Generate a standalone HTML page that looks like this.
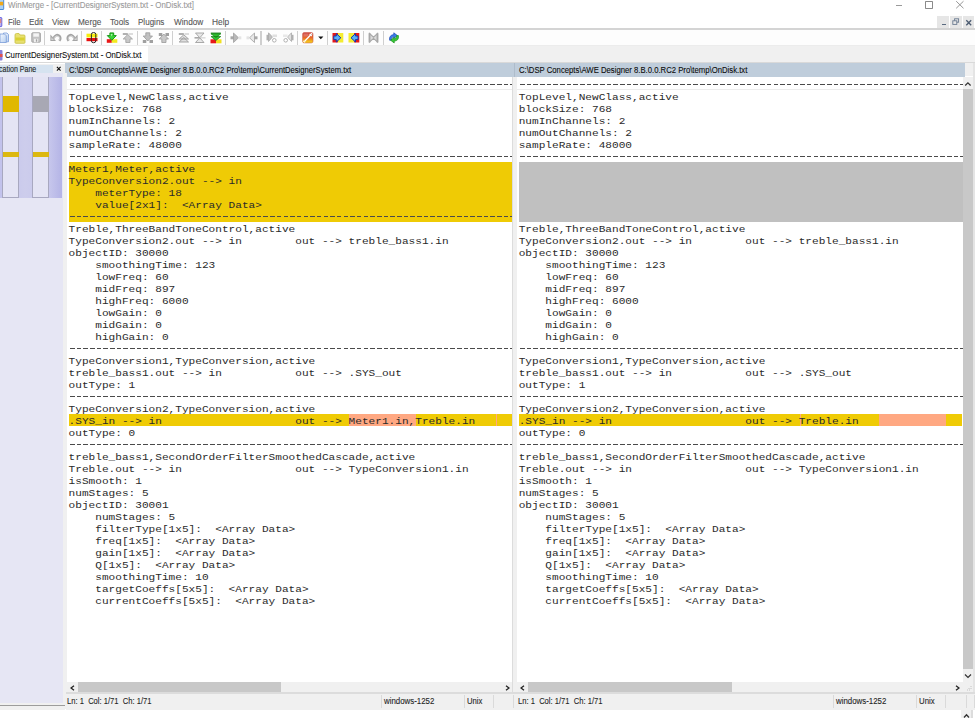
<!DOCTYPE html>
<html><head><meta charset="utf-8"><style>
html,body{margin:0;padding:0;}
body{width:975px;height:718px;overflow:hidden;position:relative;background:#fff;font-family:'Liberation Sans', sans-serif;}
body > div, body > svg, body div div, body div svg {position:absolute;}
</style></head><body>
<div style="left:0px;top:0px;width:975px;height:28px;background:#ffffff;"></div>
<div style="left:7.5px;top:0.05px;font-family:'Liberation Sans', sans-serif;font-size:8.9px;line-height:normal;color:#9a9a9a;white-space:pre;-webkit-text-stroke:0.1px #9a9a9a;transform:scaleX(0.8916);transform-origin:0 0;">WinMerge - [CurrentDesignerSystem.txt - OnDisk.txt]</div>
<div style="left:895.6px;top:4.5px;width:6.8px;height:0.9px;background:#9a9a9a;"></div>
<div style="left:925.3px;top:1.3px;width:5.5px;height:5.5px;border:0.9px solid #8a8a8a;border-radius:0.8px"></div>
<svg style="left:955px;top:0px" width="10" height="10" viewBox="0 0 10 10"><path d="M1.2 1.2 L8.5 8.3 M8.5 1.2 L1.2 8.3" stroke="#8a8a8a" stroke-width="0.9"/></svg>
<svg style="left:0px;top:0px" width="5" height="11" viewBox="0 0 5 11"><rect x="-3" y="-0.5" width="6.7" height="10" rx="0.6" fill="#a8d0f8" stroke="#3a80d0" stroke-width="0.9"/><rect x="-3" y="1.8" width="6.2" height="3.6" fill="#f0a818"/></svg>
<div style="left:7.5px;top:16.74px;font-family:'Liberation Sans', sans-serif;font-size:8.8px;line-height:normal;color:#555;white-space:pre;-webkit-text-stroke:0.1px #555;transform:scaleX(0.9022);transform-origin:0 0;">File</div>
<div style="left:29.0px;top:16.74px;font-family:'Liberation Sans', sans-serif;font-size:8.8px;line-height:normal;color:#555;white-space:pre;-webkit-text-stroke:0.1px #555;transform:scaleX(0.9228);transform-origin:0 0;">Edit</div>
<div style="left:51.7px;top:16.74px;font-family:'Liberation Sans', sans-serif;font-size:8.8px;line-height:normal;color:#555;white-space:pre;-webkit-text-stroke:0.1px #555;transform:scaleX(0.9249);transform-origin:0 0;">View</div>
<div style="left:77.8px;top:16.74px;font-family:'Liberation Sans', sans-serif;font-size:8.8px;line-height:normal;color:#555;white-space:pre;-webkit-text-stroke:0.1px #555;transform:scaleX(0.9343);transform-origin:0 0;">Merge</div>
<div style="left:109.9px;top:16.74px;font-family:'Liberation Sans', sans-serif;font-size:8.8px;line-height:normal;color:#555;white-space:pre;-webkit-text-stroke:0.1px #555;transform:scaleX(0.9296);transform-origin:0 0;">Tools</div>
<div style="left:137.79999999999998px;top:16.74px;font-family:'Liberation Sans', sans-serif;font-size:8.8px;line-height:normal;color:#555;white-space:pre;-webkit-text-stroke:0.1px #555;transform:scaleX(0.9148);transform-origin:0 0;">Plugins</div>
<div style="left:173.5px;top:16.74px;font-family:'Liberation Sans', sans-serif;font-size:8.8px;line-height:normal;color:#555;white-space:pre;-webkit-text-stroke:0.1px #555;transform:scaleX(0.9362);transform-origin:0 0;">Window</div>
<div style="left:211.7px;top:16.74px;font-family:'Liberation Sans', sans-serif;font-size:8.8px;line-height:normal;color:#555;white-space:pre;-webkit-text-stroke:0.1px #555;transform:scaleX(0.9451);transform-origin:0 0;">Help</div>
<svg style="left:0px;top:17px" width="3" height="11" viewBox="0 0 3 11"><rect x="-3" y="0.6" width="4.8" height="9" rx="0.6" fill="#c0b0e8" stroke="#5858e0" stroke-width="0.9"/><rect x="-3" y="2" width="4.3" height="4" fill="#d88888"/></svg>
<div style="left:937px;top:16px;width:11.5px;height:11.5px;background:#e6e6e6;"></div>
<div style="left:950px;top:16px;width:11.5px;height:11.5px;background:#e6e6e6;"></div>
<div style="left:962.8px;top:16px;width:11.5px;height:11.5px;background:#e6e6e6;"></div>
<div style="left:941.5px;top:23.5px;width:4px;height:1.3px;background:#5a6a80;"></div>
<svg style="left:952px;top:18px" width="8" height="8" viewBox="0 0 8 8"><rect x="2.6" y="0.8" width="4" height="3.4" fill="none" stroke="#6a7a90" stroke-width="0.9"/><rect x="0.8" y="2.8" width="4" height="3.6" fill="#e6e6e6" stroke="#6a7a90" stroke-width="0.9"/></svg>
<svg style="left:965px;top:18.5px" width="8" height="8" viewBox="0 0 8 8"><path d="M1.3 1.3 L6.2 6.2 M6.2 1.3 L1.3 6.2" stroke="#4a5a70" stroke-width="1.3"/></svg>
<div style="left:0px;top:28px;width:975px;height:1.5px;background:#d4d4d4;"></div>
<div style="left:0px;top:29.5px;width:975px;height:15.7px;background:#fdfdfd;"></div>
<div style="left:0px;top:45px;width:975px;height:1px;background:#ececec;"></div>
<div style="left:44.3px;top:31px;width:1.2px;height:13.5px;background:#cfcfcf;"></div>
<div style="left:80.6px;top:31px;width:1.2px;height:13.5px;background:#cfcfcf;"></div>
<div style="left:100.5px;top:31px;width:1.2px;height:13.5px;background:#cfcfcf;"></div>
<div style="left:136.5px;top:31px;width:1.2px;height:13.5px;background:#cfcfcf;"></div>
<div style="left:172.3px;top:31px;width:1.2px;height:13.5px;background:#cfcfcf;"></div>
<div style="left:224.5px;top:31px;width:1.2px;height:13.5px;background:#cfcfcf;"></div>
<div style="left:260.4px;top:31px;width:1.2px;height:13.5px;background:#cfcfcf;"></div>
<div style="left:296.5px;top:31px;width:1.2px;height:13.5px;background:#cfcfcf;"></div>
<div style="left:326.6px;top:31px;width:1.2px;height:13.5px;background:#cfcfcf;"></div>
<div style="left:362.6px;top:31px;width:1.2px;height:13.5px;background:#cfcfcf;"></div>
<div style="left:382.7px;top:31px;width:1.2px;height:13.5px;background:#cfcfcf;"></div>
<svg style="left:-1px;top:31.5px" width="12" height="12" viewBox="0 0 12 12"><defs><linearGradient id="nd" x1="0" y1="0" x2="1" y2="1"><stop offset="0" stop-color="#f4f8ff"/><stop offset="1" stop-color="#b8d0f0"/></linearGradient></defs><path d="M4.5 1 H8 L9.5 2.5 V9.8 H4.5 Z" fill="url(#nd)" stroke="#7a9cd8" stroke-width="0.8"/><path d="M1 2 H5.5 L7.3 3.8 V10.5 H1 Z" fill="url(#nd)" stroke="#7a9cd8" stroke-width="0.8"/></svg>
<svg style="left:13.5px;top:31.5px" width="12" height="12" viewBox="0 0 12 12"><path d="M1 3 Q1 1.5 2.5 1.5 H5 L6 3 H10 Q11 3 11 4 V10.5 Q11 11.3 10 11.3 H2 Q1 11.3 1 10.5 Z" fill="#e8e070" stroke="#c8c040" stroke-width="0.8"/><rect x="1.5" y="5.5" width="9" height="3" fill="#d8d030"/></svg>
<svg style="left:30.5px;top:31.5px" width="12" height="12" viewBox="0 0 12 12"><rect x="0.8" y="0.8" width="8.6" height="9.4" rx="0.8" fill="#c4c4c4" stroke="#a0a0a0" stroke-width="0.9"/><rect x="2.3" y="1.3" width="5.6" height="3.4" fill="#f4f4f4"/><rect x="3" y="6.8" width="4.2" height="3.4" fill="#f0f0f0"/><rect x="4.9" y="7.3" width="1.3" height="2.4" fill="#a0a0a0"/></svg>
<svg style="left:49.5px;top:32px" width="12" height="12" viewBox="0 0 12 12"><path d="M3.5 6 Q6.5 1.2 9.6 4.2 Q11.2 6.2 9.3 8.8" fill="none" stroke="#a4a4a4" stroke-width="2.4"/><path d="M3.8 5.8 Q6.5 2.4 9 4.6 Q10.2 6.2 9.1 8.2" fill="none" stroke="#dadada" stroke-width="0.8"/><path d="M0.4 2.6 L0.4 8.9 L6 8.9 Z" fill="#a4a4a4"/><path d="M1.3 5.2 L1.3 8.1 L4 8.1 Z" fill="#d4d4d4"/></svg>
<svg style="left:65.5px;top:32px" width="12" height="12" viewBox="0 0 12 12"><path d="M8.5 6 Q5.5 1.2 2.4 4.2 Q0.8 6.2 2.7 8.8" fill="none" stroke="#a4a4a4" stroke-width="2.4"/><path d="M8.2 5.8 Q5.5 2.4 3 4.6 Q1.8 6.2 2.9 8.2" fill="none" stroke="#dadada" stroke-width="0.8"/><path d="M11.6 2.6 L11.6 8.9 L6 8.9 Z" fill="#a4a4a4"/><path d="M10.7 5.2 L10.7 8.1 L8 8.1 Z" fill="#d4d4d4"/></svg>
<svg style="left:85.5px;top:32px" width="12" height="12" viewBox="0 0 12 12"><rect x="0.5" y="1.7" width="11" height="3.7" fill="#f6ee10"/><rect x="0.5" y="6" width="11" height="3.2" fill="#e81010"/><rect x="5.4" y="0.5" width="4.4" height="10.2" rx="2" fill="none" stroke="#282828" stroke-width="1"/></svg>
<svg style="left:105.5px;top:32px" width="12" height="12" viewBox="0 0 12 12"><rect x="0.8" y="7.2" width="5" height="3.6" fill="#e81818"/><rect x="5.8" y="7.2" width="5.5" height="3.6" fill="#f2ea20"/><path d="M3.9 0.9 H7.7 V3.6 H10.3 L5.8 8.3 L1.3 3.6 H3.9 Z" fill="#3ad23a" stroke="#0a900a" stroke-width="0.9"/><path d="M4.6 2 L6.6 2 L5.4 4.5 Z" fill="#c8f8c8" opacity="0.8"/></svg>
<svg style="left:121.5px;top:32px" width="12" height="12" viewBox="0 0 12 12"><rect x="0.8" y="1" width="5" height="2" fill="#b0b0b0"/><rect x="6.5" y="1" width="4.5" height="2" fill="#dcdcdc"/><path d="M5.8 2.5 L10.5 7 H8 V10.5 H3.8 V7 H1.2 Z" fill="#c8c8c8" stroke="#a0a0a0" stroke-width="0.8"/></svg>
<svg style="left:141.5px;top:32px" width="12" height="12" viewBox="0 0 12 12"><rect x="0.8" y="8" width="3.5" height="3" fill="#a0a0a0"/><rect x="7.5" y="8" width="3.5" height="3" fill="#a0a0a0"/><path d="M3.8 0.8 H7.8 V4 H10.5 L5.8 9 L1.2 4 H3.8 Z" fill="#c0c0c0" stroke="#9a9a9a" stroke-width="0.8"/></svg>
<svg style="left:157.5px;top:32px" width="12" height="12" viewBox="0 0 12 12"><rect x="0.8" y="1" width="3.5" height="3" fill="#a0a0a0"/><rect x="7.5" y="1" width="3.5" height="3" fill="#a0a0a0"/><path d="M5.8 2 L10.5 7 H8 V10.5 H3.8 V7 H1.2 Z" fill="#c8c8c8" stroke="#9a9a9a" stroke-width="0.8"/></svg>
<svg style="left:177.5px;top:32px" width="12" height="12" viewBox="0 0 12 12"><rect x="0.8" y="1" width="5" height="2" fill="#b0b0b0"/><rect x="6.5" y="1" width="4.5" height="2" fill="#dcdcdc"/><path d="M5.8 2.8 L10.5 7 H1.2 Z M5.8 5.5 L10.5 10 H1.2 Z" fill="#e0e0e0" stroke="#9a9a9a" stroke-width="0.9"/></svg>
<svg style="left:193.5px;top:32px" width="12" height="12" viewBox="0 0 12 12"><path d="M1.5 1 H10 L5.8 5.8 Z M1.5 10.5 H10 L5.8 5.8 Z" fill="#e8e8e8" stroke="#a0a0a0" stroke-width="0.9"/><rect x="0.5" y="5" width="5" height="1.6" fill="#a8a8a8"/><rect x="7" y="5" width="4.5" height="1.6" fill="#dcdcdc"/></svg>
<svg style="left:209.5px;top:32px" width="12" height="12" viewBox="0 0 12 12"><rect x="0.5" y="7.3" width="5.5" height="4" fill="#e81818"/><rect x="6" y="7.3" width="5.5" height="4" fill="#f0e020"/><rect x="0.8" y="0.6" width="10" height="1.2" fill="#108010"/><path d="M1 1.8 H10.8 L5.9 5.5 Z M1 4.5 H10.8 L5.9 8.5 Z" fill="#30c030" stroke="#108010" stroke-width="0.7"/></svg>
<svg style="left:229.5px;top:32px" width="12" height="12" viewBox="0 0 12 12"><rect x="0.5" y="4.3" width="3.5" height="3" fill="#a8a8a8"/><path d="M3.5 1 L8.5 5.8 L3.5 10.5 Z" fill="#b8b8b8" stroke="#a0a0a0" stroke-width="0.8"/><rect x="8.5" y="4.3" width="2.8" height="3" fill="#e4e4e4"/></svg>
<svg style="left:245.5px;top:32px" width="12" height="12" viewBox="0 0 12 12"><rect x="8" y="4.3" width="3.5" height="3" fill="#a8a8a8"/><path d="M8.5 1 L3.5 5.8 L8.5 10.5 Z" fill="#e8e8e8" stroke="#a0a0a0" stroke-width="0.8"/><rect x="0.5" y="4.3" width="2.8" height="3" fill="#e4e4e4"/></svg>
<svg style="left:265.5px;top:32px" width="12" height="12" viewBox="0 0 12 12"><rect x="0.5" y="2.8" width="2" height="5.5" fill="#b0b0b0"/><path d="M2.5 0.8 L6.5 5 L2.5 9.5 Z" fill="#c0c0c0" stroke="#a0a0a0" stroke-width="0.7"/><rect x="6.5" y="2.5" width="4.5" height="2.5" fill="#e0e0e0"/><circle cx="8.3" cy="8.3" r="1.8" fill="#fff" stroke="#a8a8a8" stroke-width="0.9"/></svg>
<svg style="left:281.5px;top:32px" width="12" height="12" viewBox="0 0 12 12"><rect x="9.5" y="2.8" width="2" height="5.5" fill="#b0b0b0"/><path d="M9.5 0.8 L5.5 5 L9.5 9.5 Z" fill="#e0e0e0" stroke="#a0a0a0" stroke-width="0.7"/><rect x="1" y="2.5" width="4.5" height="2.5" fill="#e8e8e8"/><circle cx="3.7" cy="8.3" r="1.8" fill="#fff" stroke="#a8a8a8" stroke-width="0.9"/></svg>
<svg style="left:302px;top:32px" width="12" height="12" viewBox="0 0 12 12"><defs><linearGradient id="og" x1="0" y1="0" x2="0" y2="1"><stop offset="0" stop-color="#c83c3c"/><stop offset="0.5" stop-color="#e86a28"/><stop offset="1" stop-color="#f8dc18"/></linearGradient></defs><rect x="0.6" y="0.5" width="10.4" height="10.4" rx="1.6" fill="url(#og)" stroke="#d06050" stroke-width="0.6"/><rect x="1.5" y="1.5" width="5" height="3" fill="#e89090" opacity="0.5"/><path d="M2.6 9.2 L8.6 3" stroke="#fff" stroke-width="1.3"/><path d="M7.6 1.8 L9.8 4 M7.8 3.3 L9.5 1.5 L10.3 2.5 M1.3 8.8 L3.1 10.4" stroke="#fff" stroke-width="1.1"/></svg>
<svg style="left:316.5px;top:35px" width="8" height="6" viewBox="0 0 8 6"><path d="M1.2 1.5 H6.4 L3.8 4.3 Z" fill="#111"/></svg>
<svg style="left:331.5px;top:32px" width="12" height="12" viewBox="0 0 12 12"><rect x="0.5" y="1" width="5.5" height="9.5" fill="#e81818"/><rect x="6" y="1" width="5.3" height="9.5" fill="#f4ec30"/><path d="M1.8 4 H4.3 V1.6 L8.8 5.8 L4.3 10 V7.6 H1.8 Z" fill="#58b0f8" stroke="#1238b0" stroke-width="1"/></svg>
<svg style="left:347.5px;top:32px" width="12" height="12" viewBox="0 0 12 12"><rect x="0.5" y="1" width="5.5" height="9.5" fill="#f4ec30"/><rect x="6" y="1" width="5.3" height="9.5" fill="#e81818"/><path d="M10 4 H7.5 V1.6 L3 5.8 L7.5 10 V7.6 H10 Z" fill="#58b0f8" stroke="#1238b0" stroke-width="1"/></svg>
<svg style="left:367.5px;top:32px" width="12" height="12" viewBox="0 0 12 12"><path d="M1.5 1.5 L5.5 5.2 L9.5 1.5 V10 L5.5 6.4 L1.5 10 Z" fill="#dcdcdc" stroke="#a8a8a8" stroke-width="1.1"/><rect x="0.6" y="1.2" width="1.8" height="9.2" fill="#a8a8a8"/><rect x="8.6" y="1.2" width="1.8" height="9.2" fill="#a8a8a8"/></svg>
<svg style="left:387.5px;top:32px" width="12" height="12" viewBox="0 0 12 12"><path d="M1.6 8.2 Q0.8 3.2 5.8 2.6 V0.8 L9.4 3.6 L5.8 6.4 V4.6 Q3.2 4.9 3.5 8.2 Z" fill="#3a7ce8" stroke="#1a48b8" stroke-width="0.7"/><path d="M10.4 3.6 Q11.2 8.6 6.2 9.2 V11 L2.6 8.2 L6.2 5.4 V7.2 Q8.8 6.9 8.5 3.6 Z" fill="#38c838" stroke="#189018" stroke-width="0.7"/></svg>
<div style="left:0px;top:45.5px;width:975px;height:17px;background:#f0f0f0;"></div>
<div style="left:0px;top:45.5px;width:148.2px;height:17px;background:#ffffff;"></div>
<svg style="left:0px;top:50px" width="3" height="11"><rect x="-3" y="0" width="5.5" height="10.5" rx="1" fill="#8a80d8"/><rect x="-3" y="4" width="5.5" height="3" fill="#e05050"/></svg>
<div style="left:5px;top:49.56px;font-family:'Liberation Sans', sans-serif;font-size:9.1px;line-height:normal;color:#111;white-space:pre;-webkit-text-stroke:0.1px #111;transform:scaleX(0.8562);transform-origin:0 0;">CurrentDesignerSystem.txt - OnDisk.txt</div>
<div style="left:0px;top:62.2px;width:975px;height:1.3px;background:#d9d9d9;"></div>
<div style="left:0px;top:63.5px;width:65.3px;height:647px;background:#f0f0f0;"></div>
<div style="left:0px;top:64.8px;width:53.2px;height:8.2px;background:#d6e3f0;"></div>
<div style="left:-30px;top:64.8px;width:83px;height:8.2px;overflow:hidden"></div>
<div style="left:-0.8px;top:63.72px;font-family:'Liberation Sans', sans-serif;font-size:8.6px;line-height:normal;color:#222;white-space:pre;-webkit-text-stroke:0.1px #222;transform:scaleX(0.8218);transform-origin:0 0;">cation Pane</div>
<svg style="left:56px;top:66.3px" width="6" height="6" viewBox="0 0 6 6"><path d="M0.9 0.9 L4.6 4.6 M4.6 0.9 L0.9 4.6" stroke="#111" stroke-width="1.15"/></svg>
<div style="left:0px;top:73px;width:63.5px;height:630.3px;background:#e6e6f4;"></div>
<div style="left:0;top:77px;width:62px;height:120.5px;background:linear-gradient(90deg,#c2c2ec 0,#c8c8ec 20%,#cdcdec 40%,#c6c6ec 80%,#b4b4e6 100%)"></div>
<div style="left:2.2px;top:77px;width:17.3px;height:120.5px;background:#e4e4f4;border-left:0.8px solid #a8a8c0;border-right:1px solid #a8a8c0;border-bottom:1px solid #a8a8c0;box-sizing:border-box;"></div>
<div style="left:32.2px;top:77px;width:17.3px;height:120.5px;background:#e4e4f4;border-left:0.8px solid #a8a8c0;border-right:1px solid #a8a8c0;border-bottom:1px solid #a8a8c0;box-sizing:border-box;"></div>
<div style="left:2.8px;top:96px;width:16.5px;height:15.8px;background:#e0b800;"></div>
<div style="left:32.9px;top:96px;width:16.5px;height:15.8px;background:#a8a8b4;"></div>
<div style="left:2.8px;top:151.9px;width:16.5px;height:5.4px;background:#dcb810;"></div>
<div style="left:32.9px;top:151.9px;width:16.5px;height:5.4px;background:#dcb810;"></div>
<div style="left:65.3px;top:62.9px;width:899.5px;height:13.8px;background:#bfcddb;"></div>
<div style="left:514px;top:62.9px;width:0.9px;height:13.8px;background:#aebccb;"></div>
<div style="left:964.8px;top:62.9px;width:10.2px;height:13.5px;background:#f0f0f0;"></div>
<div style="left:69px;top:64.41px;font-family:'Liberation Sans', sans-serif;font-size:9.6px;line-height:normal;color:#0a0a0a;white-space:pre;-webkit-text-stroke:0.1px #0a0a0a;transform:scaleX(0.7959);transform-origin:0 0;">C:\DSP Concepts\AWE Designer 8.B.0.0.RC2 Pro\temp\CurrentDesignerSystem.txt</div>
<div style="left:518.6px;top:64.41px;font-family:'Liberation Sans', sans-serif;font-size:9.6px;line-height:normal;color:#0a0a0a;white-space:pre;-webkit-text-stroke:0.1px #0a0a0a;transform:scaleX(0.8048);transform-origin:0 0;">C:\DSP Concepts\AWE Designer 8.B.0.0.RC2 Pro\temp\OnDisk.txt</div>
<div style="left:65.3px;top:76.7px;width:447px;height:606px;background:#ffffff;"></div>
<div style="left:516.5px;top:76.7px;width:447px;height:606px;background:#ffffff;"></div>
<div style="left:512.2px;top:76.7px;width:4.4px;height:617.7px;background:#f0f0f0;border-left:1px solid #dcdcdc;box-sizing:border-box;"></div>
<div style="left:63.3px;top:73px;width:3.3px;height:631.8px;background:#f0f0f0;"></div>
<div style="left:972.8px;top:62.9px;width:2.2px;height:647px;background:#e4e4e4;"></div>
<div style="left:66.5px;top:78px;width:445.7px;height:600px;overflow:hidden"><div style="left:2.10px;top:84px;width:500.00px;height:60px;background:#efcb05"></div><div style="left:2.10px;top:336px;width:500.00px;height:12px;background:#efcb05"></div><div style="left:282.32px;top:336px;width:66.72px;height:12px;background:#ffa882"></div><div style="left:429.61px;top:336px;width:1.00px;height:12px;background:#ffa882"></div><div style="left:0.00px;top:11.2px;width:445.70px;height:1px;background:#ececec"></div><div style="left:3.00px;top:5.80px;width:445.7px;height:1.1px;background:repeating-linear-gradient(90deg,#4a4a4a 0,#4a4a4a 4.6px,transparent 4.6px,transparent 6.672px)"></div><div style="left:3.00px;top:77.80px;width:445.7px;height:1.1px;background:repeating-linear-gradient(90deg,#4a4a4a 0,#4a4a4a 4.6px,transparent 4.6px,transparent 6.672px)"></div><div style="left:3.00px;top:137.80px;width:445.7px;height:1.1px;background:repeating-linear-gradient(90deg,#4a4a4a 0,#4a4a4a 4.6px,transparent 4.6px,transparent 6.672px)"></div><div style="left:3.00px;top:269.80px;width:445.7px;height:1.1px;background:repeating-linear-gradient(90deg,#4a4a4a 0,#4a4a4a 4.6px,transparent 4.6px,transparent 6.672px)"></div><div style="left:3.00px;top:317.80px;width:445.7px;height:1.1px;background:repeating-linear-gradient(90deg,#4a4a4a 0,#4a4a4a 4.6px,transparent 4.6px,transparent 6.672px)"></div><div style="left:3.00px;top:365.80px;width:445.7px;height:1.1px;background:repeating-linear-gradient(90deg,#4a4a4a 0,#4a4a4a 4.6px,transparent 4.6px,transparent 6.672px)"></div><div style="left:2.1px;top:1.5px;font-family:'Liberation Mono', monospace;font-size:11.12px;line-height:13.7931px;color:#2a2a2a;white-space:pre;transform:scaleY(0.87);transform-origin:0 0;">
TopLevel,NewClass,active
blockSize: 768
numInChannels: 2
numOutChannels: 2
sampleRate: 48000

Meter1,Meter,active
TypeConversion2.out --&gt; in
    meterType: 18
    value[2x1]:  &lt;Array Data&gt;

Treble,ThreeBandToneControl,active
TypeConversion2.out --&gt; in        out --&gt; treble_bass1.in
objectID: 30000
    smoothingTime: 123
    lowFreq: 60
    midFreq: 897
    highFreq: 6000
    lowGain: 0
    midGain: 0
    highGain: 0

TypeConversion1,TypeConversion,active
treble_bass1.out --&gt; in           out --&gt; .SYS_out
outType: 1

TypeConversion2,TypeConversion,active
.SYS_in --&gt; in                    out --&gt; Meter1.in,Treble.in
outType: 0

treble_bass1,SecondOrderFilterSmoothedCascade,active
Treble.out --&gt; in                 out --&gt; TypeConversion1.in
isSmooth: 1
numStages: 5
objectID: 30001
    numStages: 5
    filterType[1x5]:  &lt;Array Data&gt;
    freq[1x5]:  &lt;Array Data&gt;
    gain[1x5]:  &lt;Array Data&gt;
    Q[1x5]:  &lt;Array Data&gt;
    smoothingTime: 10
    targetCoeffs[5x5]:  &lt;Array Data&gt;
    currentCoeffs[5x5]:  &lt;Array Data&gt;</div></div>
<div style="left:516.6px;top:78px;width:446.6px;height:600px;overflow:hidden"><div style="left:2.10px;top:84px;width:500.00px;height:60px;background:#c0c0c0"></div><div style="left:2.10px;top:336px;width:443.70px;height:12px;background:#efcb05"></div><div style="left:282.92px;top:336px;width:1.00px;height:12px;background:#ffa882"></div><div style="left:362.39px;top:336px;width:66.72px;height:12px;background:#ffa882"></div><div style="left:0.00px;top:11.2px;width:446.60px;height:1px;background:#ececec"></div><div style="left:3.00px;top:5.80px;width:446.6px;height:1.1px;background:repeating-linear-gradient(90deg,#4a4a4a 0,#4a4a4a 4.6px,transparent 4.6px,transparent 6.672px)"></div><div style="left:3.00px;top:77.80px;width:446.6px;height:1.1px;background:repeating-linear-gradient(90deg,#4a4a4a 0,#4a4a4a 4.6px,transparent 4.6px,transparent 6.672px)"></div><div style="left:3.00px;top:269.80px;width:446.6px;height:1.1px;background:repeating-linear-gradient(90deg,#4a4a4a 0,#4a4a4a 4.6px,transparent 4.6px,transparent 6.672px)"></div><div style="left:3.00px;top:317.80px;width:446.6px;height:1.1px;background:repeating-linear-gradient(90deg,#4a4a4a 0,#4a4a4a 4.6px,transparent 4.6px,transparent 6.672px)"></div><div style="left:3.00px;top:365.80px;width:446.6px;height:1.1px;background:repeating-linear-gradient(90deg,#4a4a4a 0,#4a4a4a 4.6px,transparent 4.6px,transparent 6.672px)"></div><div style="left:2.1px;top:1.5px;font-family:'Liberation Mono', monospace;font-size:11.12px;line-height:13.7931px;color:#2a2a2a;white-space:pre;transform:scaleY(0.87);transform-origin:0 0;">
TopLevel,NewClass,active
blockSize: 768
numInChannels: 2
numOutChannels: 2
sampleRate: 48000






Treble,ThreeBandToneControl,active
TypeConversion2.out --&gt; in        out --&gt; treble_bass1.in
objectID: 30000
    smoothingTime: 123
    lowFreq: 60
    midFreq: 897
    highFreq: 6000
    lowGain: 0
    midGain: 0
    highGain: 0

TypeConversion1,TypeConversion,active
treble_bass1.out --&gt; in           out --&gt; .SYS_out
outType: 1

TypeConversion2,TypeConversion,active
.SYS_in --&gt; in                    out --&gt; Treble.in
outType: 0

treble_bass1,SecondOrderFilterSmoothedCascade,active
Treble.out --&gt; in                 out --&gt; TypeConversion1.in
isSmooth: 1
numStages: 5
objectID: 30001
    numStages: 5
    filterType[1x5]:  &lt;Array Data&gt;
    freq[1x5]:  &lt;Array Data&gt;
    gain[1x5]:  &lt;Array Data&gt;
    Q[1x5]:  &lt;Array Data&gt;
    smoothingTime: 10
    targetCoeffs[5x5]:  &lt;Array Data&gt;
    currentCoeffs[5x5]:  &lt;Array Data&gt;</div></div>
<div style="left:963.2px;top:76.7px;width:9.6px;height:605.5px;background:#f0f0f0;"></div>
<div style="left:963.2px;top:89px;width:9.6px;height:580.3px;background:#c8c8c8;"></div>
<svg style="left:964.3px;top:81px" width="8" height="6" viewBox="0 0 8 6"><path d="M1.2 4.5 L3.9 1.8 L6.6 4.5" fill="none" stroke="#333" stroke-width="1.2"/></svg>
<svg style="left:964px;top:672.5px" width="8" height="6" viewBox="0 0 8 6"><path d="M1 1.5 L4 4.5 L7 1.5" fill="none" stroke="#333" stroke-width="1.2"/></svg>
<div style="left:66.5px;top:681.9px;width:445.7px;height:10px;background:#f0f0f0;"></div>
<div style="left:78px;top:681.9px;width:203.2px;height:9.9px;background:#c8c8c8;"></div>
<div style="left:516.6px;top:681.9px;width:446.6px;height:10px;background:#f0f0f0;"></div>
<div style="left:528.2px;top:681.9px;width:203.5px;height:9.9px;background:#c8c8c8;"></div>
<div style="left:963.2px;top:681.9px;width:9.6px;height:10px;background:#f0f0f0;"></div>
<svg style="left:70px;top:684.5px" width="5" height="6" viewBox="0 0 5 6"><path d="M4 0.8 L1 3 L4 5.2" fill="none" stroke="#222" stroke-width="1.3"/></svg>
<svg style="left:504.6px;top:684.5px" width="5" height="6" viewBox="0 0 5 6"><path d="M1 0.8 L4 3 L1 5.2" fill="none" stroke="#222" stroke-width="1.3"/></svg>
<svg style="left:520px;top:684.5px" width="5" height="6" viewBox="0 0 5 6"><path d="M4 0.8 L1 3 L4 5.2" fill="none" stroke="#222" stroke-width="1.3"/></svg>
<svg style="left:955px;top:684.5px" width="5" height="6" viewBox="0 0 5 6"><path d="M1 0.8 L4 3 L1 5.2" fill="none" stroke="#222" stroke-width="1.3"/></svg>
<svg style="left:965px;top:684px" width="7" height="7" viewBox="0 0 7 7"><path d="M6 2 V6 M4 4 V6 M2 6 H6" stroke="#b8b8b8" stroke-width="0.8" stroke-dasharray="1 1"/></svg>
<div style="left:66.2px;top:691.9px;width:908.8px;height:2.4px;background:#dcdcdc;"></div>
<div style="left:66.4px;top:694px;width:908.6px;height:15.5px;background:#f0f0f0;"></div>
<div style="left:0px;top:703.3px;width:67px;height:6.2px;background:#f0f0f0;"></div>
<div style="left:0px;top:704.9px;width:65.3px;height:1px;background:#9c9c9c;"></div>
<div style="left:381.1px;top:695px;width:0.9px;height:13px;background:#dadada;"></div>
<div style="left:464.20000000000005px;top:695px;width:0.9px;height:13px;background:#dadada;"></div>
<div style="left:492.6px;top:695px;width:0.9px;height:13px;background:#dadada;"></div>
<div style="left:513.4px;top:695px;width:0.9px;height:13px;background:#dadada;"></div>
<div style="left:833.1px;top:695px;width:0.9px;height:13px;background:#dadada;"></div>
<div style="left:915.8000000000001px;top:695px;width:0.9px;height:13px;background:#dadada;"></div>
<div style="left:945.1px;top:695px;width:0.9px;height:13px;background:#dadada;"></div>
<div style="left:965.6px;top:695px;width:0.9px;height:13px;background:#dadada;"></div>
<div style="left:973.6px;top:695px;width:0.9px;height:13px;background:#dadada;"></div>
<div style="left:66.9px;top:695.84px;font-family:'Liberation Sans', sans-serif;font-size:8.8px;line-height:normal;color:#1e1e1e;white-space:pre;-webkit-text-stroke:0.1px #1e1e1e;transform:scaleX(0.8639);transform-origin:0 0;">Ln: 1  Col: 1/71  Ch: 1/71</div>
<div style="left:517.7px;top:695.84px;font-family:'Liberation Sans', sans-serif;font-size:8.8px;line-height:normal;color:#1e1e1e;white-space:pre;-webkit-text-stroke:0.1px #1e1e1e;transform:scaleX(0.8639);transform-origin:0 0;">Ln: 1  Col: 1/71  Ch: 1/71</div>
<div style="left:384.2px;top:695.84px;font-family:'Liberation Sans', sans-serif;font-size:8.8px;line-height:normal;color:#1e1e1e;white-space:pre;-webkit-text-stroke:0.1px #1e1e1e;transform:scaleX(0.8960);transform-origin:0 0;">windows-1252</div>
<div style="left:466.9px;top:695.84px;font-family:'Liberation Sans', sans-serif;font-size:8.8px;line-height:normal;color:#1e1e1e;white-space:pre;-webkit-text-stroke:0.1px #1e1e1e;transform:scaleX(0.8745);transform-origin:0 0;">Unix</div>
<div style="left:835.6px;top:695.84px;font-family:'Liberation Sans', sans-serif;font-size:8.8px;line-height:normal;color:#1e1e1e;white-space:pre;-webkit-text-stroke:0.1px #1e1e1e;transform:scaleX(0.8960);transform-origin:0 0;">windows-1252</div>
<div style="left:918.6px;top:695.84px;font-family:'Liberation Sans', sans-serif;font-size:8.8px;line-height:normal;color:#1e1e1e;white-space:pre;-webkit-text-stroke:0.1px #1e1e1e;transform:scaleX(0.8859);transform-origin:0 0;">Unix</div>
<div style="left:0px;top:709.5px;width:975px;height:8.5px;background:#ffffff;"></div>
<div style="left:961.2px;top:710px;width:10px;height:8px;background:#f0f0f0;"></div>
<div style="left:971.2px;top:710px;width:1.8px;height:8px;background:#dcdcdc;"></div>
<svg style="left:963px;top:713px" width="7" height="6" viewBox="0 0 7 6"><path d="M1 4.5 L3.5 1.8 L6 4.5" fill="none" stroke="#333" stroke-width="1.3"/></svg>
</body></html>
